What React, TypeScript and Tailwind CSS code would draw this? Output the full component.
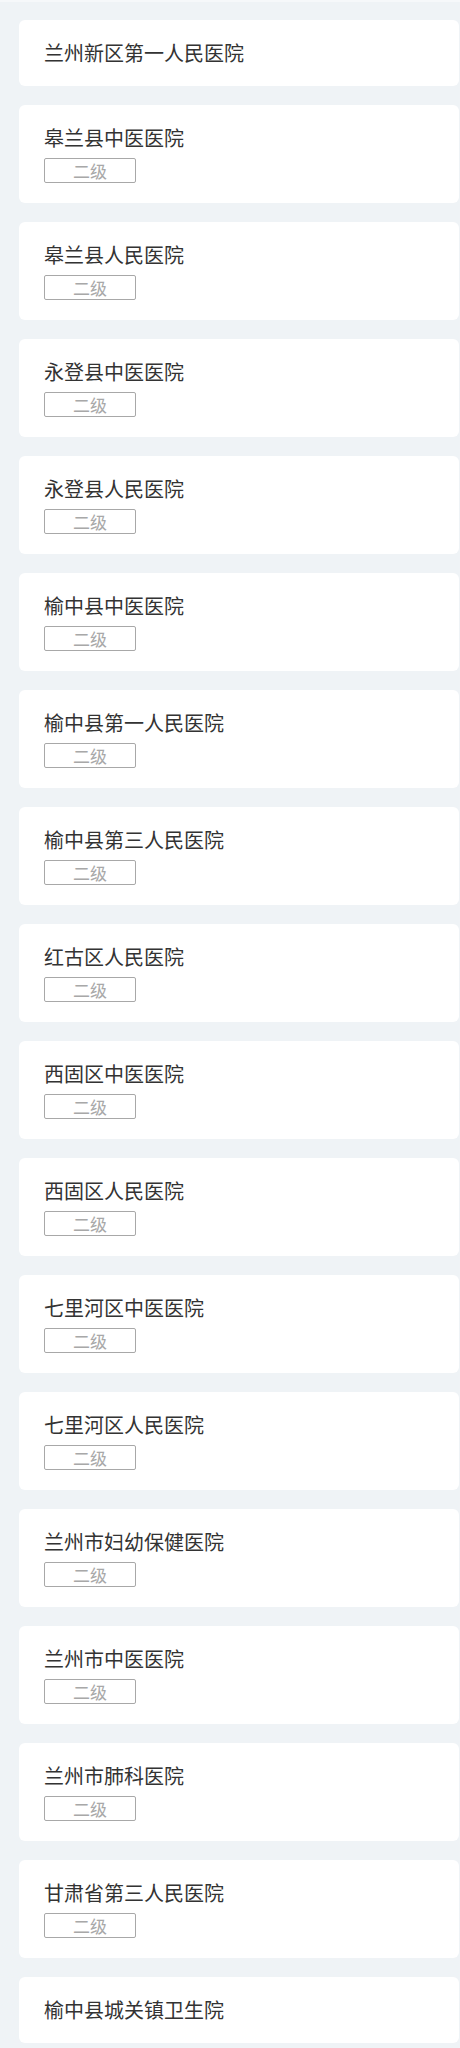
const hospitals: { name: string; level?: string }[] = [
  { name: '兰州新区第一人民医院' },
  { name: '皋兰县中医医院', level: '二级' },
  { name: '皋兰县人民医院', level: '二级' },
  { name: '永登县中医医院', level: '二级' },
  { name: '永登县人民医院', level: '二级' },
  { name: '榆中县中医医院', level: '二级' },
  { name: '榆中县第一人民医院', level: '二级' },
  { name: '榆中县第三人民医院', level: '二级' },
  { name: '红古区人民医院', level: '二级' },
  { name: '西固区中医医院', level: '二级' },
  { name: '西固区人民医院', level: '二级' },
  { name: '七里河区中医医院', level: '二级' },
  { name: '七里河区人民医院', level: '二级' },
  { name: '兰州市妇幼保健医院', level: '二级' },
  { name: '兰州市中医医院', level: '二级' },
  { name: '兰州市肺科医院', level: '二级' },
  { name: '甘肃省第三人民医院', level: '二级' },
  { name: '榆中县城关镇卫生院' },
];

const HospitalCard = ({ name, level }: { name: string; level?: string }) => (
  <div className="rounded-[6px] bg-white px-[25px] py-[20px]">
    <div className="text-[20px] leading-[26px] text-[#333333]">{name}</div>
    {level && (
      <div className="mt-[7px] flex h-[25px] w-[92px] items-center justify-center rounded-[2px] border border-[#a8a8a8] text-[17px] leading-none text-[#a8a8a8]">
        {level}
      </div>
    )}
  </div>
);

export default function App() {
  return (
    <div
      className="min-h-[2048px] bg-[#eff3f6]"
      style={{ fontFamily: '"Noto Sans CJK SC", "Noto Sans", sans-serif' }}
    >
      <div className="h-[2px] bg-[#f6f8fa]" />
      <div className="flex flex-col gap-[19px] pl-[19px] pr-[1px] pt-[18px]">
        {hospitals.map((h) => (
          <HospitalCard key={h.name} name={h.name} level={h.level} />
        ))}
      </div>
    </div>
  );
}
